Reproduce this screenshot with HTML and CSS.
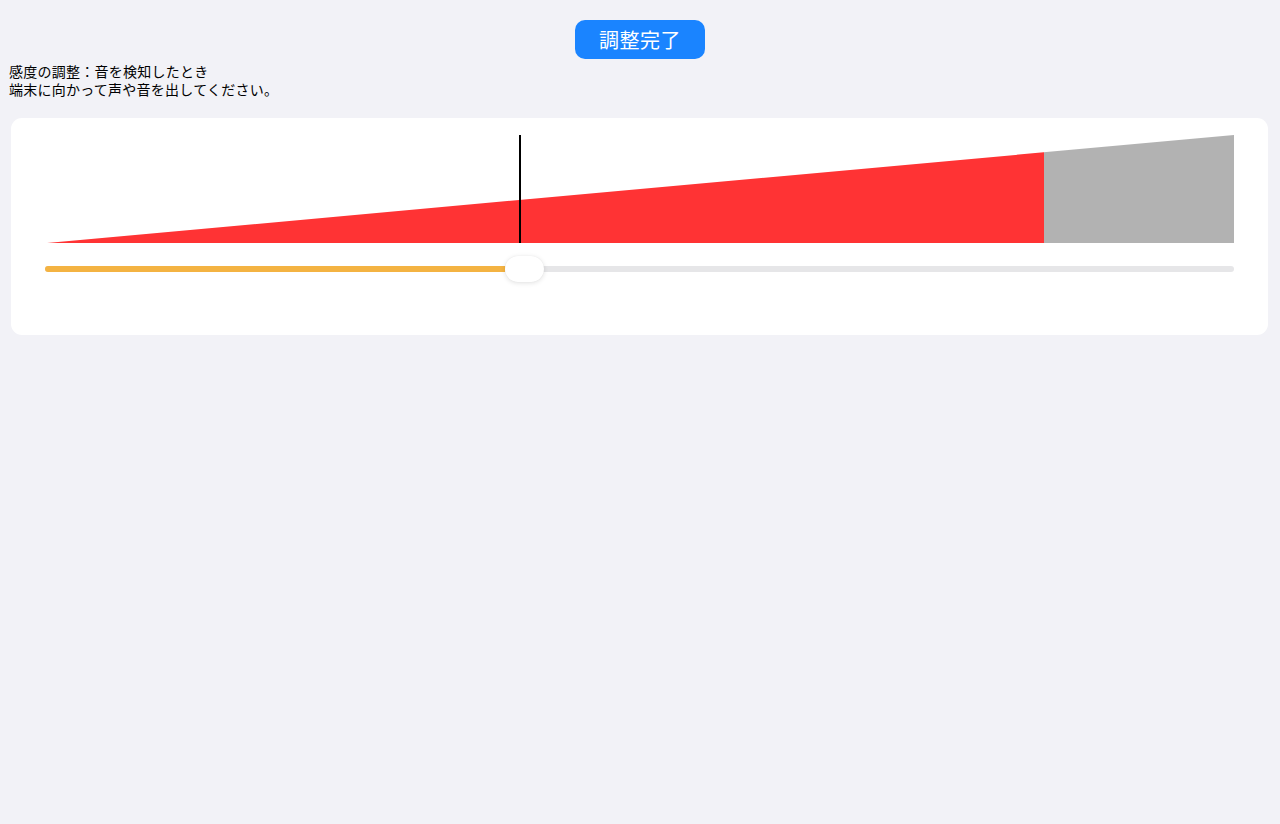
FILE: index.html
```html
<!DOCTYPE html>
<html lang="ja">
  <head>
    <meta charset="UTF-8" />
    <meta name="viewport" content="width=device-width, initial-scale=1.0" />
    <title>感度の調整</title>
    <link rel="stylesheet" href="styles.css">
  </head>
  <body>
    <div class="toolbar">
      <button class="done-btn">調整完了</button>
    </div>

    <div class="hint">
      <div>感度の調整：音を検知したとき</div>
      <div>端末に向かって声や音を出してください。</div>
    </div>

    <div class="card">
      <div class="meter">
        <div class="meter-shape"></div>
        <div class="meter-mark" style="left: 39.8%"></div>
      </div>

      <div class="slider">
        <div class="slider-track">
          <div class="slider-fill" style="width: 38.7%"></div>
        </div>
        <div class="slider-thumb" style="left: 38.7%"></div>
      </div>
    </div>
  </body>
</html>
```

FILE: styles.css
```css
:root {
  --bg: #f2f2f7;
  --card: #ffffff;
  --blue: #1a84ff;
  --red: #ff3334;
  --grey: #b2b2b2;
  --orange: #f4b342;
  --track: #e6e6e8;
}
body {
  font-family: "Noto Sans CJK JP", "Noto Sans", sans-serif;
  background: var(--bg);
  color: #000;
  margin: 0;
  padding: 20px 12px 0 11px;
}
.toolbar {
  display: flex;
  justify-content: center;
  padding-left: 1px;
}
.done-btn {
  background: var(--blue);
  color: #fff;
  border: none;
  border-radius: 10px;
  width: 130px;
  height: 39px;
  font-family: inherit;
  font-size: 20px;
  letter-spacing: 0.5px;
  padding: 0;
}
.hint {
  margin: 3px 0 0 -2px;
  font-size: 14px;
  line-height: 18px;
  letter-spacing: 0.25px;
}
.card {
  background: var(--card);
  border-radius: 11px;
  margin-top: 20px;
  height: 217px;
  box-sizing: border-box;
  padding: 17px 34px 0 36px;
}
.meter {
  position: relative;
  height: 108px;
}
.meter-shape {
  height: 100%;
  background: linear-gradient(to right, var(--red) 84%, var(--grey) 84%);
  clip-path: polygon(0 100%, 100% 0, 100% 100%);
}
.meter-mark {
  position: absolute;
  top: 0;
  bottom: 0;
  width: 2px;
  background: #000;
}
.slider {
  position: relative;
  height: 26px;
  margin: 13px 0 0 -2px;
  display: flex;
  align-items: center;
}
.slider-track {
  flex: 1;
  height: 6px;
  border-radius: 3px;
  background: var(--track);
  overflow: hidden;
}
.slider-fill {
  height: 100%;
  background: var(--orange);
}
.slider-thumb {
  position: absolute;
  top: 0;
  width: 39px;
  height: 26px;
  border-radius: 13px;
  background: #fff;
  box-shadow: 0 1px 5px rgba(0, 0, 0, 0.12), 0 0 1px rgba(0, 0, 0, 0.08);
}
```
